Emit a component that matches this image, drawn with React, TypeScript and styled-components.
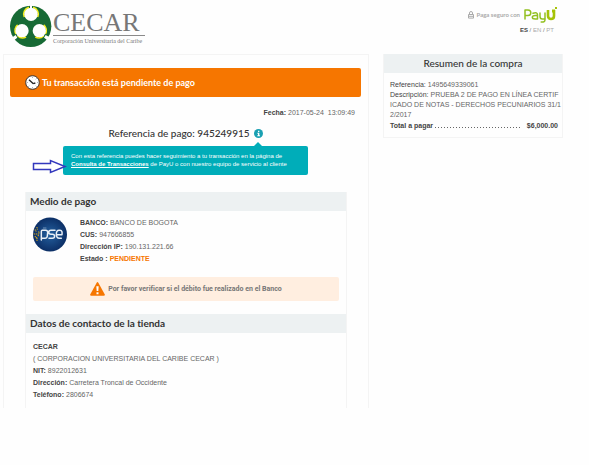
import React from 'react';
import styled, { createGlobalStyle } from 'styled-components';

const GlobalStyle = createGlobalStyle`
  * { box-sizing: border-box; }
  body {
    margin: 0;
    background: #fefefe;
    color: #666;
    font: 7px/12px "Liberation Sans", Arial, sans-serif;
    font-variant-ligatures: none;
  }
  h1, h2, p, dl, dd { margin: 0; }
`;

const headingFont = 'Lato, "Open Sans", sans-serif';

const Page = styled.div`
  padding: 0 26px 0 3px;
`;

const Header = styled.header`
  display: flex;
  justify-content: space-between;
  align-items: flex-start;
  height: 54px;
  padding: 5px 6px 0 7px;
`;

const Brand = styled.div`
  display: flex;
  gap: 1px;
`;

const BrandText = styled.div`
  display: flex;
  flex-direction: column;
  padding-top: 6px;
  font-family: "Liberation Serif", "Times New Roman", serif;
`;

const BrandName = styled.span`
  border-bottom: 1px solid #8a8a8a;
  padding: 0 5px 0 0;
  color: #777;
  font-size: 26px;
  line-height: 24px;
`;

const BrandTagline = styled.span`
  color: #777;
  font-size: 6px;
  line-height: 10px;
`;

const Secure = styled.div`
  display: flex;
  flex-direction: column;
  align-items: flex-end;
`;

const SecureRow = styled.div`
  display: flex;
  align-items: center;
  gap: 3px;
  height: 19px;
  color: #aaa;
  font: 700 6px/19px ${headingFont};
`;

const Languages = styled.nav`
  padding-right: 3px;
  color: #777;
  font-size: 6px;
  line-height: 12px;
`;

const Language = styled.a<{ $active?: boolean }>`
  color: ${(p) => (p.$active ? '#444' : '#aaa')};
  font-weight: ${(p) => (p.$active ? 700 : 400)};
  text-decoration: none;
`;

const Columns = styled.div`
  display: grid;
  grid-template-columns: 366fr 180fr;
  gap: 14px;
  align-items: start;
`;

const Main = styled.main`
  border: 1px solid #f4f4f4;
  border-bottom: 0;
  padding: 13px 7px 0 6px;
`;

const Banner = styled.div`
  display: flex;
  align-items: center;
  gap: 2px;
  height: 29px;
  padding-left: 15px;
  border-radius: 2px;
  background: #f67600;
  color: #fff;
`;

const BannerTitle = styled.h1`
  font: 700 9px/16px ${headingFont};
  font-variant-ligatures: none;
`;

const DateLine = styled.p`
  padding: 10px 6px 0 0;
  text-align: right;
  white-space: pre;
`;

const Strong = styled.strong`
  color: #444;
`;

const Label = styled.span`
  color: #444;
`;

const Reference = styled.div`
  display: flex;
  justify-content: center;
  align-items: center;
  gap: 4px;
  height: 18px;
  margin-top: 5px;
`;

const ReferenceTitle = styled.h2`
  color: #333;
  font: 500 10px/18px ${headingFont};
`;

const Tip = styled.aside`
  position: relative;
  margin: 4px 53px 17px;
  padding: 6px 8px 7px;
  border-radius: 2px;
  background: #00adb9;
  color: #fff;
  font-size: 6px;
  line-height: 8px;

  &::before {
    content: "";
    position: absolute;
    top: -4px;
    right: 46px;
    border: 4px solid transparent;
    border-top: 0;
    border-bottom-color: #00adb9;
  }
`;

const TipLink = styled.a`
  color: #fff;
  font-weight: 700;
`;

const Arrow = styled.svg`
  position: absolute;
  left: -31px;
  top: 13px;
`;

const Section = styled.section`
  display: flow-root;
  margin: 0 14px 0 15px;
  border: 1px solid #f4f4f4;
  border-top: 0;
  border-bottom: 0;
`;

const SectionTitle = styled.h2`
  padding-left: 4px;
  background: #edf1f2;
  color: #333;
  font: 700 10px/19px ${headingFont};
  font-variant-ligatures: none;
`;

const Payment = styled.div`
  display: flex;
  gap: 13px;
  padding: 6px 7px 0;
`;

const Details = styled.dl`
  line-height: 12px;
`;

const Detail = styled.div`
  display: flex;
  gap: 2px;
`;

const Term = styled.dt`
  color: #444;
  font-weight: 700;
`;

const Value = styled.dd<{ $pending?: boolean }>`
  color: ${(p) => (p.$pending ? '#f67600' : '#666')};
  font-weight: ${(p) => (p.$pending ? 700 : 400)};
`;

const Alert = styled.div`
  display: flex;
  justify-content: center;
  align-items: center;
  gap: 3px;
  height: 24px;
  margin: 12px 7px 13px;
  border-radius: 2px;
  background: #ffeee0;
  color: #777;
  font-family: Roboto, sans-serif;
  font-weight: 700;
`;

const Store = styled.div`
  padding: 8px 7px 7px;
`;

const Summary = styled.aside`
  border: 1px solid #f4f4f4;
  border-top: 0;
`;

const SummaryTitle = styled.h2`
  background: #edf1f2;
  color: #333;
  font: 500 10px/19px ${headingFont};
  text-align: center;
`;

const SummaryBody = styled.div`
  padding: 7px 0 5px 6px;
  line-height: 10px;
`;

const Description = styled.p`
  white-space: nowrap;
`;

const Total = styled.div`
  display: flex;
  align-items: baseline;
  gap: 2px;
  padding-right: 4px;
  color: #444;
  font-weight: 700;
  line-height: 12px;
`;

const Leader = styled.span`
  flex: 1;
  height: 1px;
  margin-right: 4px;
  background: repeating-linear-gradient(90deg, #666 0 1px, transparent 1px 3px);
`;

const CecarMark = () => (
  <svg width="42" height="43" viewBox="0 0 126 129" aria-hidden="true">
    <circle cx="62" cy="64" r="62" fill="#176a35" />
    <path d="M60 0h6v10h-6zM5 98l12-8 5 8-10 8zM107 90l12 7-6 9-11-8z" fill="#fefefe" />
    <g fill="none" stroke="#f5ed19" strokeWidth="5">
      <path d="M43 36a21 21 0 0 1 14-29M69 7a21 21 0 0 1 14 29" />
      <path d="M23 60a21 21 0 0 0-5 27M23 92a21 21 0 0 0 25 4" />
      <path d="M101 60a21 21 0 0 1 5 27M101 92a21 21 0 0 1-25 4" />
    </g>
    <circle cx="63" cy="28" r="20" fill="#fefefe" />
    <circle cx="36" cy="77" r="20" fill="#fefefe" />
    <circle cx="88" cy="77" r="20" fill="#fefefe" />
  </svg>
);

const Lock = () => (
  <svg width="6" height="8" viewBox="0 0 6 8" fill="none" stroke="#aaa" aria-hidden="true">
    <path d="M1.5 3.5V2a1.5 1.5 0 0 1 3 0v1.5M.5 3.5h5v3.6h-5zM1 5.3h4" />
  </svg>
);

const PayU = () => (
  <svg width="34" height="19" viewBox="0 0 34 19" role="img" aria-label="PayU">
    <g fill="none" stroke="#92c020" strokeWidth="1.5" strokeLinecap="round" strokeLinejoin="round">
      <path d="M2 14V5h3a2.8 2.8 0 0 1 0 5.6H2M10 8.2c3-1 4.5-.4 4.5 1.600V14h-2.200c-4 0-4-3.500 0-3.500h2.200M17 8v3.200c0 2 .8 2.800 2.300 2.800H21M22 8v6.500c0 2-1 2.700-3.800 2.500" />
      <path d="M25 5v6c0 4 6 4 6 0V5" stroke="#a6c307" strokeWidth="2.6" strokeLinecap="butt" />
    </g>
    <path d="M29 4.5h3v3h-3zM32 2h2v2h-2z" fill="#a6c307" />
  </svg>
);

const Clock = () => (
  <svg width="15" height="15" viewBox="0 0 45 45" aria-hidden="true">
    <circle cx="22.5" cy="22.5" r="20.5" fill="#fff" stroke="#3d3530" strokeWidth="3" />
    <path d="M25 26 12 14M25 26l6-2" stroke="#222" strokeWidth="4" fill="none" />
    <path d="M22.5 5v4M22.5 36v4M5 22.5h4M36 22.5h4M35 10l-3 3M10 35l3-3M35 35l-3-3" stroke="#888" strokeWidth="2" />
  </svg>
);

const Info = () => (
  <svg width="9" height="9" viewBox="0 0 27 27" aria-hidden="true">
    <circle cx="13.5" cy="13.5" r="13.5" fill="#1aa0b2" />
    <path d="M12 5h4v4h-4zM10 11h6v8h2v3h-8v-3h2v-5h-2z" fill="#fff" />
  </svg>
);

const Pse = () => (
  <svg width="34" height="35" viewBox="0 0 102 105" role="img" aria-label="pse">
    <defs>
      <radialGradient id="pse-blue">
        <stop offset="0" stopColor="#24609f" />
        <stop offset="1" stopColor="#0c2f66" />
      </radialGradient>
    </defs>
    <circle cx="51" cy="52.5" r="51" fill="url(#pse-blue)" />
    <g fill="none" stroke="#e9eff6" strokeWidth="4.5" strokeLinecap="round" strokeLinejoin="round">
      <path d="M25 69V43q0-3 3-3h10q7 0 6 7l-1 10q-1 7-7 7h-9M66 40H54c-9 0-9 12 0 12h4c9 0 9 12 0 12H48M71 53h16c1-8 0-13-6-13h-3c-6 0-8 5-8 12 0 8 1 12 9 12h6" />
      <path d="M31 33h8" strokeWidth="2" stroke="#9bb8d8" />
    </g>
    <path d="M2 51h16M5 39h4v5M10 32h3v6M5 59h5v7M12 62v10M15 45h4v4M14 56h5" stroke="#d7a920" strokeWidth="3" strokeDasharray="4 2" fill="none" />
  </svg>
);

const Warning = () => (
  <svg width="15" height="14" viewBox="0 0 45 42" aria-hidden="true">
    <path d="M20 2q2.5-4 5 0l19 35q2 4-3 4H4q-5 0-3-4z" fill="#f67600" />
    <path d="M19 13h7l-1 14h-5zM19.5 31h6v6h-6z" fill="#fff" />
  </svg>
);

const Row = ({ label, value, pending }: { label: string; value: string; pending?: boolean }) => (
  <Detail>
    <Term>{label}</Term>
    <Value $pending={pending}>{value}</Value>
  </Detail>
);

export default function App() {
  return (
    <Page>
      <GlobalStyle />
      <Header>
        <Brand>
          <CecarMark />
          <BrandText>
            <BrandName>CECAR</BrandName>
            <BrandTagline>Corporación Universitaria del Caribe</BrandTagline>
          </BrandText>
        </Brand>
        <Secure>
          <SecureRow>
            <Lock />
            <span>Paga seguro con</span>
            <PayU />
          </SecureRow>
          <Languages>
            <Language href="#es" $active>ES</Language> / <Language href="#en">EN</Language> /{' '}
            <Language href="#pt">PT</Language>
          </Languages>
        </Secure>
      </Header>
      <Columns>
        <Main>
          <Banner>
            <Clock />
            <BannerTitle>Tu transacción está pendiente de pago</BannerTitle>
          </Banner>
          <DateLine>
            <Strong>Fecha:</Strong> {'2017-05-24  13:09:49'}
          </DateLine>
          <Reference>
            <ReferenceTitle>Referencia de pago: 945249915</ReferenceTitle>
            <Info />
          </Reference>
          <Tip>
            <Arrow width="36" height="15" viewBox="0 0 36 15" aria-hidden="true">
              <path d="M1.5 4.5h17v-3L33 7.5l-14.5 6v-3h-17z" fill="#fff" stroke="#3338bd" strokeWidth="1.5" />
            </Arrow>
            Con esta referencia puedes hacer seguimiento a tu transacción en la página de
            <br />
            <TipLink href="#consulta">Consulta de Transacciones</TipLink> de PayU o con nuestro equipo de servicio al cliente
          </Tip>
          <Section>
            <SectionTitle>Medio de pago</SectionTitle>
            <Payment>
              <Pse />
              <Details>
                <Row label="BANCO:" value="BANCO DE BOGOTA" />
                <Row label="CUS:" value="947666855" />
                <Row label="Dirección IP:" value="190.131.221.66" />
                <Row label="Estado :" value="PENDIENTE" pending />
              </Details>
            </Payment>
            <Alert>
              <Warning />
              <span>Por favor verificar si el débito fue realizado en el Banco</span>
            </Alert>
          </Section>
          <Section>
            <SectionTitle>Datos de contacto de la tienda</SectionTitle>
            <Store>
              <Strong>CECAR</Strong>
              <p>( CORPORACION UNIVERSITARIA DEL CARIBE CECAR )</p>
              <Details>
                <Row label="NIT:" value="8922012631" />
                <Row label="Dirección:" value="Carretera Troncal de Occidente" />
                <Row label="Teléfono:" value="2806674" />
              </Details>
            </Store>
          </Section>
        </Main>
        <Summary>
          <SummaryTitle>Resumen de la compra</SummaryTitle>
          <SummaryBody>
            <p><Label>Referencia:</Label> 1495649339061</p>
            <Description>
              <Label>Descripción:</Label> PRUEBA 2 DE PAGO EN LÍNEA CERTIF
              <br />
              ICADO DE NOTAS - DERECHOS PECUNIARIOS 31/1
              <br />
              2/2017
            </Description>
            <Total>
              <span>Total a pagar</span>
              <Leader />
              <span>$6,000.00</span>
            </Total>
          </SummaryBody>
        </Summary>
      </Columns>
    </Page>
  );
}
